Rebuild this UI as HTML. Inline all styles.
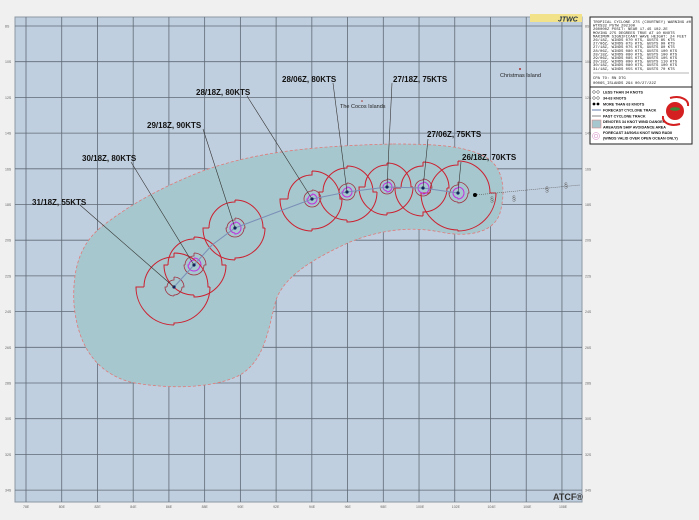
<!DOCTYPE html>
<html><head><meta charset="utf-8">
<style>
html,body{margin:0;padding:0;background:#f0f0f0;}
body{width:699px;height:520px;position:relative;overflow:hidden;font-family:"Liberation Sans",sans-serif;}
svg{position:absolute;left:0;top:0;}
.lab{font:bold 8px "Liberation Sans",sans-serif;fill:#111;}
.tiny{font:3.9px "Liberation Mono",monospace;fill:#222;}
.leg{font:bold 3.7px "Liberation Sans",sans-serif;fill:#111;}
.ax{font:3.5px "Liberation Sans",sans-serif;fill:#666;}
</style></head><body>
<svg id="s" width="699" height="520" xmlns="http://www.w3.org/2000/svg">
<rect x="15" y="17" width="567" height="485" fill="#c0cfdf" stroke="#8d98a4" stroke-width="1"/>
<g id="grid" stroke="#5f6a76" stroke-width="0.8"></g>
<path d="M393,144 C440,144 470,146 490,160 C505,172 505,195 500,213 C494,232 470,238 440,232 C410,226 380,230 350,242 C315,258 285,275 276,300 C268,330 265,360 240,375 C215,388 170,390 130,382 C95,372 78,345 74,305 C72,270 80,245 100,228 C125,208 155,190 200,172 C245,155 300,146 393,144 Z" fill="#a6c7cd" stroke="#e07a7a" stroke-width="0.8" stroke-dasharray="3,2"/>
<g id="circ" fill="none"></g>
<polyline points="458,193 423,188 387,187 347,192 312,199 280,211 235,228 212,245 194,265 174,287" fill="none" stroke="#7a8fb8" stroke-width="1"/>
<line x1="475" y1="195" x2="580" y2="185" stroke="#555" stroke-width="0.6" stroke-dasharray="1,1"/>
<text x="490" y="202" style="font:7px sans-serif;fill:#666">§</text>
<text x="512" y="201" style="font:7px sans-serif;fill:#666">§</text>
<text x="545" y="192" style="font:7px sans-serif;fill:#666">§</text>
<text x="564" y="188" style="font:7px sans-serif;fill:#666">§</text>
<circle cx="475" cy="195" r="2" fill="#000"/>
<g id="dots"></g>
<g stroke="#333" stroke-width="0.6">
<line x1="458" y1="193" x2="461" y2="162"/>
<line x1="423" y1="188" x2="428" y2="139"/>
<line x1="387" y1="187" x2="392" y2="83"/>
<line x1="347" y1="192" x2="333" y2="83"/>
<line x1="312" y1="199" x2="247" y2="96"/>
<line x1="235" y1="228" x2="203" y2="129"/>
<line x1="194" y1="265" x2="131" y2="162"/>
<line x1="174" y1="287" x2="80" y2="205"/>
</g>
<text class="lab" x="462" y="160">26/18Z,  70KTS</text>
<text class="lab" x="427" y="137">27/06Z,  75KTS</text>
<text class="lab" x="393" y="82">27/18Z,  75KTS</text>
<text class="lab" x="282" y="82">28/06Z,  80KTS</text>
<text class="lab" x="196" y="95">28/18Z,  80KTS</text>
<text class="lab" x="147" y="128">29/18Z,  90KTS</text>
<text class="lab" x="82" y="161">30/18Z,  80KTS</text>
<text class="lab" x="32" y="205">31/18Z,  55KTS</text>
<text x="500" y="77" style="font:5.5px 'Liberation Sans',sans-serif;fill:#222">Christmas Island</text>
<circle cx="520" cy="69" r="1" fill="#a33"/>
<text x="340" y="108" style="font:5.5px 'Liberation Sans',sans-serif;fill:#222">The Cocos Islands</text>
<circle cx="362" cy="101" r="0.8" fill="#a33"/>
<text x="553" y="500" style="font:bold 9px 'Liberation Sans',sans-serif;fill:#333">ATCF®</text>
<rect x="530" y="14" width="52" height="8" fill="#f2e28a"/>
<text x="558" y="21.5" style="font:bold italic 7px 'Liberation Sans',sans-serif;fill:#234">JTWC</text>
<rect x="590" y="17" width="102" height="70" fill="#fff" stroke="#222" stroke-width="1"/>
<rect x="590" y="87" width="102" height="57" fill="#fff" stroke="#222" stroke-width="1"/>
<g id="txt"></g>
<line x1="593" y1="73" x2="689" y2="73" stroke="#444" stroke-width="0.4"/>
<text class="tiny" x="593" y="79">CPA TO:             RN     DTG</text>
<text class="tiny" x="593" y="84">00065_ISLANDS      294  00/27/22Z</text>
<g class="leg">
<circle cx="594" cy="92" r="1.3" fill="none" stroke="#000" stroke-width="0.4"/><circle cx="598" cy="92" r="1.3" fill="none" stroke="#000" stroke-width="0.4"/>
<text x="603" y="93.5">LESS THAN 34 KNOTS</text>
<circle cx="594" cy="98" r="1.3" fill="none" stroke="#000" stroke-width="0.4"/><circle cx="598" cy="98" r="1.3" fill="none" stroke="#000" stroke-width="0.4"/>
<text x="603" y="99.5">34-63 KNOTS</text>
<circle cx="594" cy="104" r="1.4" fill="#000"/><circle cx="598" cy="104" r="1.4" fill="#000"/>
<text x="603" y="105.5">MORE THAN 63 KNOTS</text>
<line x1="592" y1="110" x2="601" y2="110" stroke="#7a8fb8" stroke-width="1.2"/>
<text x="603" y="111.5">FORECAST CYCLONE TRACK</text>
<line x1="592" y1="116" x2="601" y2="116" stroke="#333" stroke-width="0.6"/>
<text x="603" y="117.5">PAST CYCLONE TRACK</text>
<rect x="592" y="120" width="9" height="8" fill="#a6c7cd" stroke="#e07a7a" stroke-width="0.5"/>
<text x="603" y="123">DENOTES 34 KNOT WIND DANGER</text>
<text x="603" y="128.5">AREA/USN SHIP AVOIDANCE AREA</text>
<circle cx="596" cy="136" r="3.5" fill="none" stroke="#d080c0" stroke-width="0.5"/><circle cx="596" cy="136" r="1.8" fill="none" stroke="#d080c0" stroke-width="0.5"/>
<text x="603" y="134">FORECAST 34/50/64 KNOT WIND RADII</text>
<text x="603" y="139.5">(WINDS VALID OVER OPEN OCEAN ONLY)</text>
</g>
<circle cx="675" cy="111" r="9" fill="#d42020"/>
<path d="M670,98 C681,95 689,100 688,106 M680,124 C669,127 662,122 663,116" fill="none" stroke="#d42020" stroke-width="2"/>
<ellipse cx="675" cy="109" rx="5" ry="1.8" fill="#3a8a3a"/>
</svg>
<script>
var NS="http://www.w3.org/2000/svg",g=document.getElementById('grid');
function el(p,t,a){var e=document.createElementNS(NS,t);for(var k in a)e.setAttribute(k,a[k]);p.appendChild(e);return e;}
var s=document.getElementById('s');
for(var i=0;i<16;i++){var x=26+i*35.73;el(g,'line',{x1:x,y1:17,x2:x,y2:502});
 var t=el(s,'text',{x:x-3,y:508,'class':'ax'});t.textContent=(78+i*2)+'E';}
for(var j=0;j<14;j++){var y=26+j*35.7;el(g,'line',{x1:15,y1:y,x2:582,y2:y});
 var t=el(s,'text',{x:5,y:y+1.5,'class':'ax'});t.textContent=(8+j*2)+'S';
 var t2=el(s,'text',{x:585,y:y+1.5,'class':'ax'});t2.textContent=(8+j*2)+'S';}
var c=document.getElementById('circ');
function quad(cx,cy,r,col,w){var d='';var a=[[0,-1,1,0],[1,0,0,1],[0,1,-1,0],[-1,0,0,-1]];
 for(var q=0;q<4;q++){var R=r[q],v=a[q];var x2=cx+v[2]*R,y2=cy+v[3]*R;
 d+='M'+(cx+v[0]*R)+','+(cy+v[1]*R)+' A'+R+','+R+' 0 0 1 '+x2+','+y2;
 var nR=r[(q+1)%4];d+=' L'+(cx+v[2]*nR)+','+(cy+v[3]*nR);}
 el(c,'path',{d:d,stroke:col,'stroke-width':w,fill:'none'});}
var C=[[458,193,[32,38,37,28],[11,10,9,8],[6,6,5,5]],[423,188,[26,24,28,22],[9,8,8,8],[6,6,5,5]],[387,187,[24,26,28,22],[8,7,7,7],[5,5,4,4]],[347,192,[26,30,28,24],[9,8,8,8],[5,5,5,4]],[312,199,[28,30,32,24],[9,8,8,8],[5,5,5,4]],[235,228,[28,30,32,26],[10,9,9,8],[6,6,5,5]],[194,265,[28,32,30,26],[12,10,10,9],[7,6,6,5]],[174,287,[34,36,38,30],[10,8,9,7],[0,0,0,0]]];
C.forEach(function(k){quad(k[0],k[1],k[2],'#cc2030',1);quad(k[0],k[1],k[3],'#a03040',0.8);if(k[4][0])quad(k[0],k[1],k[4],'#c030e0',1);
 el(document.getElementById('dots'),'circle',{cx:k[0],cy:k[1],r:1.6,fill:'#102060'});});
var L=["TROPICAL CYCLONE 27S (COURTNEY) WARNING #0","WTXS32 PGTW 292100","260000Z POSIT: NEAR 17.4S 102.2E","MOVING 275 DEGREES TRUE AT 10 KNOTS","MAXIMUM SIGNIFICANT WAVE HEIGHT: 24 FEET","26/18Z, WINDS 070 KTS, GUSTS 85 KTS","27/06Z, WINDS 075 KTS, GUSTS 90 KTS","27/18Z, WINDS 075 KTS, GUSTS 90 KTS","28/06Z, WINDS 080 KTS, GUSTS 100 KTS","28/18Z, WINDS 080 KTS, GUSTS 100 KTS","29/06Z, WINDS 085 KTS, GUSTS 105 KTS","29/18Z, WINDS 090 KTS, GUSTS 110 KTS","30/18Z, WINDS 080 KTS, GUSTS 100 KTS","31/18Z, WINDS 055 KTS, GUSTS 70 KTS"];
var tx=document.getElementById('txt');L.forEach(function(l,i){var t=el(tx,'text',{x:593,y:23+i*3.6,'class':'tiny'});t.textContent=l;});
</script>
</body></html>
